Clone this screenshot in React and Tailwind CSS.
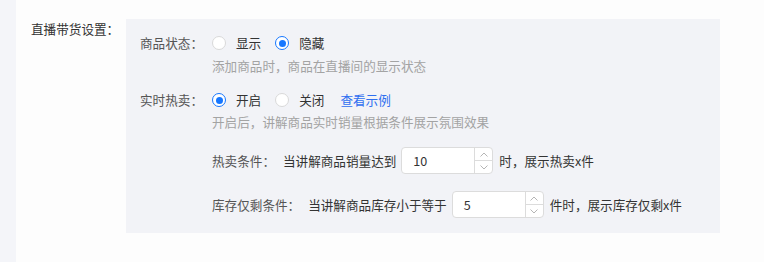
import React from "react";

const font = { fontFamily: '"Noto Sans CJK SC", "Noto Sans", sans-serif' };

function Radio({ checked, label }) {
  return (
    <div className="flex items-center">
      {checked ? (
        <span className="w-[14px] h-[14px] rounded-full border border-[#1677ff] bg-white flex items-center justify-center">
          <span className="w-[7px] h-[7px] rounded-full bg-[#1677ff]" />
        </span>
      ) : (
        <span className="w-[14px] h-[14px] rounded-full border border-[#d9d9d9] bg-white" />
      )}
      <span className="ml-[10px] text-[#333]">{label}</span>
    </div>
  );
}

function NumInput({ value }) {
  return (
    <div className="w-[92px] h-[27px] bg-white border border-[#dcdcdc] rounded-[4px] flex">
      <div className="flex-1 pl-[11px] flex items-center text-[#333]">{value}</div>
      <div className="w-[18px] border-l border-[#dcdcdc] flex flex-col">
        <div className="flex-1 flex items-center justify-center border-b border-[#dcdcdc]">
          <svg width="8" height="5" viewBox="0 0 8 5" fill="none">
            <path d="M0.5 4.5 L4 1 L7.5 4.5" stroke="#b5b5b5" strokeWidth="1" />
          </svg>
        </div>
        <div className="flex-1 flex items-center justify-center">
          <svg width="8" height="5" viewBox="0 0 8 5" fill="none">
            <path d="M0.5 0.5 L4 4 L7.5 0.5" stroke="#b5b5b5" strokeWidth="1" />
          </svg>
        </div>
      </div>
    </div>
  );
}

export default function App() {
  return (
    <div
      className="w-[764px] h-[262px] flex bg-[#f4f5f9] text-[12.6px] leading-[20px]"
      style={font}
    >
      <div className="w-[16px]" />
      <div className="flex-1 bg-[#fdfdfd] flex items-start pt-[19px]">
        <div className="w-[110px] pl-[15px] pt-[0px] h-[20px] text-[#333]">
          直播带货设置：
        </div>
        <div className="w-[594px] h-[214px] bg-[#f2f3f7] pl-[14px] pt-[13px]">
          <div className="flex items-center h-[22px]">
            <div className="w-[72px] text-[#555]">商品状态：</div>
            <div className="flex items-center gap-[14px]">
              <Radio label="显示" />
              <Radio checked label="隐藏" />
            </div>
          </div>
          <div className="ml-[72px] mt-[3px] h-[18px] flex items-center text-[#a3a3a3]">
            添加商品时，商品在直播间的显示状态
          </div>
          <div className="flex items-center h-[22px] mt-[14px]">
            <div className="w-[72px] text-[#555]">实时热卖：</div>
            <div className="flex items-center gap-[14px]">
              <Radio checked label="开启" />
              <Radio label="关闭" />
              <span className="ml-[2px] text-[#2f6ff0]">查看示例</span>
            </div>
          </div>
          <div className="ml-[72px] mt-[2px] h-[18px] flex items-center text-[#a3a3a3]">
            开启后，讲解商品实时销量根据条件展示氛围效果
          </div>
          <div className="ml-[72px] mt-[16px] flex items-center h-[27px]">
            <span className="text-[#555]">热卖条件：</span>
            <span className="ml-[8px] text-[#333]">当讲解商品销量达到</span>
            <div className="ml-[5px]">
              <NumInput value="10" />
            </div>
            <span className="ml-[6px] text-[#333]">时，展示热卖x件</span>
          </div>
          <div className="ml-[72px] mt-[17px] flex items-center h-[27px]">
            <span className="text-[#555]">库存仅剩条件：</span>
            <span className="ml-[8px] text-[#333]">当讲解商品库存小于等于</span>
            <div className="ml-[5px]">
              <NumInput value="5" />
            </div>
            <span className="ml-[6px] text-[#333]">件时，展示库存仅剩x件</span>
          </div>
        </div>
      </div>
    </div>
  );
}
